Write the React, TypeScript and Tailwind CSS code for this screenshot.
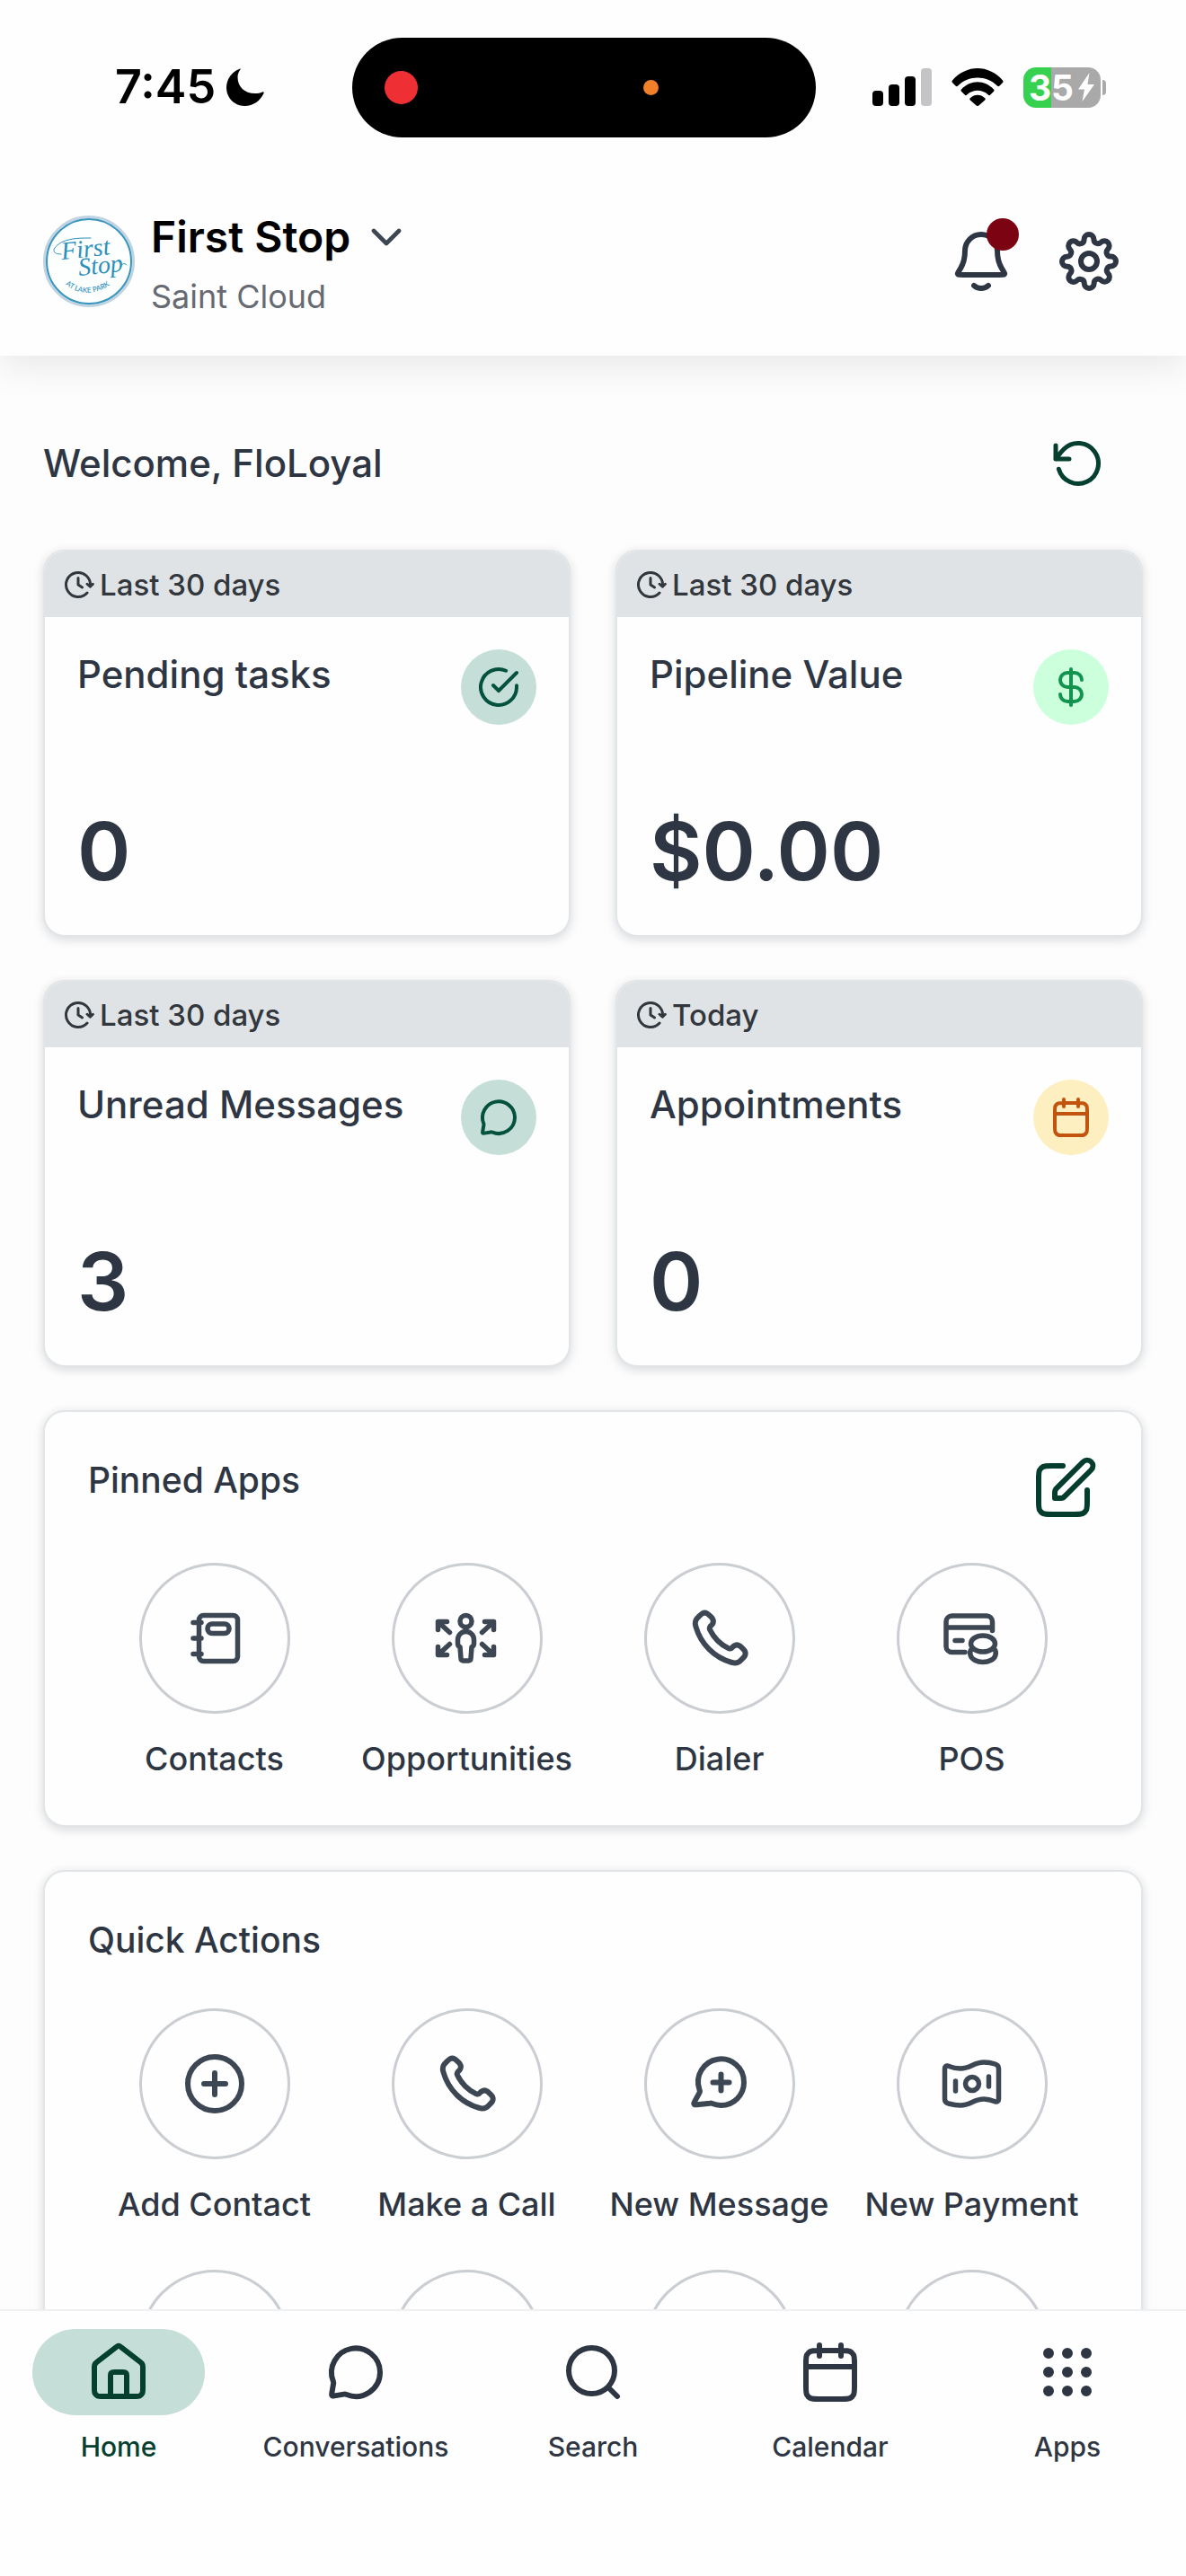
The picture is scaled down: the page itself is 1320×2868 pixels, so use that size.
import type { ReactNode } from "react";

interface IconProps {
  className?: string;
  children: ReactNode;
}

/* 24-unit line icons */
function Icon({ className, children }: IconProps) {
  return (
    <svg
      viewBox="0 0 24 24"
      fill="none"
      stroke="currentColor"
      strokeWidth="2"
      strokeLinecap="round"
      strokeLinejoin="round"
      aria-hidden="true"
      className={className}
    >
      {children}
    </svg>
  );
}

/* 72-unit line icons, used for the more detailed app glyphs */
function AppIcon({ children }: { children: ReactNode }) {
  return (
    <svg
      viewBox="0 0 72 72"
      fill="none"
      stroke="currentColor"
      strokeWidth="5.5"
      strokeLinecap="round"
      strokeLinejoin="round"
      aria-hidden="true"
      className="size-18"
    >
      {children}
    </svg>
  );
}

const BELL = (
  <path d="M9.354 21c.705.622 1.632 1 2.646 1s1.94-.378 2.646-1M18 8A6 6 0 1 0 6 8c0 3.09-.78 5.206-1.65 6.605-.735 1.18-1.102 1.771-1.089 1.936.015.182.054.252.2.36.133.099.732.099 1.928.099H18.61c1.197 0 1.795 0 1.927-.098.147-.11.186-.179.2-.361.014-.165-.353-.755-1.088-1.936C18.78 13.206 18 11.09 18 8Z" />
);

const SETTINGS = (
  <>
    <path d="M12 15a3 3 0 1 0 0-6 3 3 0 0 0 0 6Z" />
    <path d="M18.727 14.727a1.5 1.5 0 0 0 .3 1.655l.055.054a1.816 1.816 0 0 1 0 2.573 1.818 1.818 0 0 1-2.573 0l-.055-.055a1.5 1.5 0 0 0-1.654-.3 1.5 1.5 0 0 0-.91 1.373v.155a1.818 1.818 0 1 1-3.636 0V20.1a1.5 1.5 0 0 0-.981-1.373 1.5 1.5 0 0 0-1.655.3l-.054.055a1.818 1.818 0 0 1-3.106-1.287 1.818 1.818 0 0 1 .533-1.286l.054-.055a1.5 1.5 0 0 0 .3-1.654 1.5 1.5 0 0 0-1.372-.91h-.155a1.818 1.818 0 1 1 0-3.636H3.9a1.5 1.5 0 0 0 1.373-.981 1.5 1.5 0 0 0-.3-1.655l-.055-.054A1.818 1.818 0 1 1 7.491 4.99l.054.054a1.5 1.5 0 0 0 1.655.3h.073a1.5 1.5 0 0 0 .909-1.372v-.155a1.818 1.818 0 0 1 3.636 0V3.9a1.499 1.499 0 0 0 .91 1.373 1.5 1.5 0 0 0 1.654-.3l.054-.055a1.817 1.817 0 0 1 2.573 0 1.819 1.819 0 0 1 0 2.573l-.055.054a1.5 1.5 0 0 0-.3 1.655v.073a1.5 1.5 0 0 0 1.373.909h.155a1.818 1.818 0 0 1 0 3.636H20.1a1.499 1.499 0 0 0-1.373.91Z" />
  </>
);

const MESSAGE = (
  <path d="M21 12a9 9 0 0 1-12.408 8.332c-.201-.083-.303-.124-.384-.142a.95.95 0 0 0-.226-.028c-.083 0-.174.015-.355.046l-3.58.596c-.374.063-.562.094-.698.036a.53.53 0 0 1-.278-.278c-.058-.136-.027-.324.036-.698l.596-3.58c.031-.181.046-.272.046-.355a.95.95 0 0 0-.028-.226c-.018-.081-.059-.183-.142-.384A9 9 0 1 1 21 12Z" />
);

const CALENDAR = (
  <path d="M21 10H3M16 2v4M8 2v4M7.8 22h8.4c1.68 0 2.52 0 3.162-.327a3 3 0 0 0 1.311-1.311C21 19.72 21 18.88 21 17.2V8.8c0-1.68 0-2.52-.327-3.162a3 3 0 0 0-1.311-1.311C18.72 4 17.88 4 16.2 4H7.8c-1.68 0-2.52 0-3.162.327a3 3 0 0 0-1.311 1.311C3 6.28 3 7.12 3 8.8v8.4c0 1.68 0 2.52.327 3.162a3 3 0 0 0 1.311 1.311C5.28 22 6.12 22 7.8 22Z" />
);

const PHONE = (
  <Icon className="size-18">
    <path d="M8.38 8.853a14.603 14.603 0 0 0 2.847 4.01 14.603 14.603 0 0 0 4.01 2.847c.124.06.187.09.265.112.28.082.625.023.862-.147.067-.048.124-.105.239-.219.35-.35.524-.524.7-.639a2 2 0 0 1 2.18 0c.176.115.35.29.7.64l.195.194c.532.531.797.797.942 1.082a2 2 0 0 1 0 1.806c-.145.285-.41.551-.942 1.082l-.157.158c-.53.53-.795.794-1.155.997-.4.224-1.02.386-1.478.384-.413-.001-.695-.081-1.26-.241a19.038 19.038 0 0 1-8.283-4.874A19.039 19.039 0 0 1 3.17 7.761c-.16-.564-.24-.846-.241-1.26-.002-.458.16-1.078.384-1.477.203-.36.468-.625.997-1.155l.158-.157c.53-.532.797-.798 1.082-.942a2 2 0 0 1 1.806 0c.285.144.551.41 1.082.942l.195.195c.35.35.524.524.64.7a2 2 0 0 1 0 2.18c-.116.176-.29.35-.64.7-.114.114-.171.171-.22.238-.17.237-.228.582-.146.862.023.079.053.141.113.266Z" />
  </Icon>
);

const STATS = [
  {
    period: "Last 30 days",
    title: "Pending tasks",
    value: "0",
    tone: "bg-[#c5dfd8] text-[#04513d]",
    icon: <path d="M22 11.086v.92a10 10 0 1 1-5.93-9.14M22 4 12 14.01l-3-3" />,
  },
  {
    period: "Last 30 days",
    title: "Pipeline Value",
    value: "$0.00",
    tone: "bg-[#ccffdb] text-[#12944f]",
    icon: <path d="M6 16a4 4 0 0 0 4 4h4a4 4 0 0 0 0-8h-4a4 4 0 1 1 0-8h4a4 4 0 0 1 4 4M12 2v20" />,
  },
  {
    period: "Last 30 days",
    title: "Unread Messages",
    value: "3",
    tone: "bg-[#c5dfd8] text-[#04513d]",
    icon: MESSAGE,
  },
  {
    period: "Today",
    title: "Appointments",
    value: "0",
    tone: "bg-[#fdefc0] text-[#c2540f]",
    icon: CALENDAR,
  },
];

const PINNED_APPS = [
  {
    label: "Contacts",
    icon: (
      <AppIcon>
        <rect x="18.5" y="10.5" width="43" height="51" rx="5" />
        <rect x="28" y="20" width="24" height="10.5" rx="5" />
        <path d="M12 18.5h9M12 36h9M12 53.5h9" />
      </AppIcon>
    ),
  },
  {
    label: "Opportunities",
    icon: (
      <AppIcon>
        <circle cx="34.5" cy="17" r="6.5" />
        <path d="M34.5 28.5a9 9 0 0 1 9 9v4.5c0 2-1 3-2.5 3.5L40 58.5c0 1.5-1 2.5-2.5 2.5h-6c-1.5 0-2.5-1-2.5-2.5L28 45.5c-1.5-.5-2.5-1.5-2.5-3.5v-4.500a9 9 0 0 1 9-9Z" />
        <path d="M3.5 26.5v-9h10M4.5 18.5l12 11M65.5 26.5v-9h-10M64.5 18.5l-12 11M3.5 45.5v9h10M4.5 53.5l12-11M65.5 45.5v9h-10M64.5 53.5l-12-11" />
      </AppIcon>
    ),
  },
  { label: "Dialer", icon: PHONE },
  {
    label: "POS",
    icon: (
      <AppIcon>
        <path d="M28 51.5H13.5A6.5 6.5 0 0 1 7 45V17.5a6.500 6.500 0 0 1 6.500-6.500h38.500a6.500 6.500 0 0 1 6.500 6.500V27.500M8 24h50M17 38.500h8" />
        <ellipse cx="48" cy="42" rx="13.5" ry="9" />
        <path d="M34.5 49c-1 2-1 4.5-.2 6.5 1.5 4 7 7 13.7 7s12.2-3 13.7-7c.8-2 .8-4.500-.2-6.500" />
      </AppIcon>
    ),
  },
];

const QUICK_ACTIONS = [
  {
    label: "Add Contact",
    icon: (
      <Icon className="size-18">
        <circle cx="12" cy="12" r="10" />
        <path d="M12 8v8M8 12h8" />
      </Icon>
    ),
  },
  { label: "Make a Call", icon: PHONE },
  {
    label: "New Message",
    icon: (
      <Icon className="size-18">
        <path d="M12.500 8.500v6M9.500 11.500h6M21 11.500a8.500 8.500 0 0 1-8.500 8.500c-1.148 0-2.242-.228-3.240-.640-.190-.079-.286-.118-.363-.135a1 1 0 0 0-.206-.026 1.600 1.600 0 0 0-.243.018l-4.930.510c-.490.050-.733.076-.878-.012a.5.5 0 0 1-.234-.350c-.026-.167.090-.382.324-.814l1.637-3.030c.135-.250.202-.375.233-.495a1 1 0 0 0 .038-.355c-.010-.123-.064-.284-.172-.604A8.500 8.500 0 1 1 21 11.500Z" />
      </Icon>
    ),
  },
  {
    label: "New Payment",
    icon: (
      <AppIcon>
        <path d="M5.5 19c0-2.5 1.5-3.5 4-2.8C14 18 18.5 19 23 19c11 0 15-7 26-7 5 0 9 .8 12.5 2 2.5.8 4 2 4 5v34c0 2.5-1.5 3.5-4 2.8C57 54 53.5 53 49 53c-11 0-15 7-26 7-5 0-9-.8-13.500-2-2.500-.8-4-2-4-5Z" />
        <circle cx="36" cy="36" r="7.5" />
        <path d="M17.5 33v11M54.5 28v11" />
      </AppIcon>
    ),
  },
];

const TABS = [
  {
    label: "Home",
    icon: (
      <path d="M9 21v-7.4c0-.56 0-.84.109-1.054a1 1 0 0 1 .437-.437C9.76 12 10.04 12 10.6 12h2.8c.56 0 .84 0 1.054.109a1 1 0 0 1 .437.437C15 12.76 15 13.04 15 13.6V21M11.018 2.764 4.235 8.039c-.453.353-.68.53-.843.75a2 2 0 0 0-.318.65C3 9.704 3 9.991 3 10.565V17.8c0 1.12 0 1.68.218 2.108a2 2 0 0 0 .874.874C4.52 21 5.08 21 6.2 21h11.6c1.12 0 1.68 0 2.108-.218a2 2 0 0 0 .874-.874C21 19.48 21 18.92 21 17.8v-7.235c0-.574 0-.861-.074-1.126a2 2 0 0 0-.318-.65c-.163-.22-.39-.397-.843-.75l-6.783-5.275c-.351-.273-.527-.41-.72-.462a1 1 0 0 0-.523 0c-.194.052-.37.189-.721.462Z" />
    ),
  },
  { label: "Conversations", icon: MESSAGE },
  {
    label: "Search",
    icon: <path d="m21 21-3.5-3.5M20 11.5a8.5 8.5 0 1 1-17 0 8.5 8.5 0 0 1 17 0Z" />,
  },
  { label: "Calendar", icon: CALENDAR },
  {
    label: "Apps",
    icon: (
      <>
        {[5, 12, 19].map((y) =>
          [5, 12, 19].map((x) => <circle key={`${x}-${y}`} cx={x} cy={y} r="1" />)
        )}
      </>
    ),
  },
];

function StatusBar() {
  return (
    <div className="grid h-[194px] grid-cols-[1fr_auto_1fr] items-center pr-5 text-black">
      <div className="flex items-center gap-3 pl-32">
        <span className="text-[52px] leading-none font-semibold">7:45</span>
        <svg viewBox="0 0 42 42" className="size-[42px]" aria-hidden="true">
          <path
            fill="currentColor"
            d="M14.5.8C5.5 4.500 0 12.500 0 21.500 0 33 9 42 20.500 42 29.500 42 37.500 36.500 41.500 28c.6-1.300-.3-2-1.500-1.500-2.500 1-5 1.500-8 1.500C20 28 12.500 20.500 12.500 10c0-3 .8-5.500 2.800-8.200.8-1.100.3-1.500-.8-1Z"
          />
        </svg>
      </div>
      <div className="flex h-[111px] w-[516px] items-center justify-between rounded-full bg-black pr-[175px] pl-9">
        <span className="size-[37px] rounded-full bg-[#ee3035]" />
        <span className="size-[17px] rounded-full bg-[#f2802b]" />
      </div>
      <div className="flex items-center justify-end gap-[22px] pr-[69px]">
        <svg viewBox="0 0 66 42" className="h-[42px] w-[66px]" aria-hidden="true">
          <rect x="0" y="25" width="12" height="17" rx="4" />
          <rect x="18" y="18" width="12" height="24" rx="4" />
          <rect x="36" y="9" width="12" height="33" rx="4" />
          <rect x="54" y="0" width="12" height="42" rx="4" fill="#c4c4c6" />
        </svg>
        <svg viewBox="0 0 58 42" className="h-[42px] w-[58px]" aria-hidden="true">
          <path d="M1 13.5C16.5-4.5 41.5-4.5 57 13.5c.8 1 .7 1.700 0 2.500l-3.500 3.500c-1 1-1.800.8-2.600 0C39 7.500 19 7.500 7.100 19.500c-.8.8-1.600 1-2.600 0L1 16c-.7-.8-.8-1.500 0-2.500Z" />
          <path d="M11 23.5c10-11 26-11 36 0 .7.800.7 1.500 0 2.300L43.300 29.500c-.9.900-1.600.8-2.500 0-7-6.200-16.600-6.200-23.600 0-.9.800-1.600.9-2.500 0L11 25.800c-.7-.8-.7-1.500 0-2.300Z" />
          <path d="M20.8 33.2c4.700-4.600 11.700-4.600 16.400 0 .8.800.7 1.500 0 2.200L30.300 41.500c-.9.800-1.700.8-2.600 0l-6.900-6.100c-.7-.7-.8-1.400 0-2.200Z" />
        </svg>
        <div className="flex items-center gap-[2px]">
          <div className="flex h-[45px] w-[86px] items-center justify-center gap-1 rounded-[14px] bg-linear-to-r from-[#35d14f] from-36% to-[#a9a9aa] to-36% text-white">
            <span className="text-[39px] leading-none font-bold">35</span>
            <svg viewBox="0 0 20 34" className="h-[34px] w-5" aria-hidden="true">
              <path fill="currentColor" d="M13.5 1 1 19.5h7L5.5 33 19 14h-7.5Z" />
            </svg>
          </div>
          <span className="h-[17px] w-1 rounded-r-full bg-[#a9a9aa]" />
        </div>
      </div>
    </div>
  );
}

function Logo() {
  return (
    <svg viewBox="0 0 102 102" className="size-[102px] shrink-0" role="img" aria-label="First Stop logo">
      <circle cx="51" cy="51" r="49.5" fill="#fdfefe" stroke="#bfd3e0" strokeWidth="3" />
      <circle cx="51" cy="51" r="47" fill="none" stroke="#3795bd" strokeWidth="2" />
      <g fill="#2b8fbb" className="font-['Liberation_Serif',cursive] italic">
        <text x="21" y="49" fontSize="28" transform="rotate(-6 21 49)">First</text>
        <text x="40" y="67" fontSize="28" transform="rotate(-6 40 67)">Stop</text>
      </g>
      <path
        d="M20 43c-12 0-10-8 2-14 10-4 20-4 31-4M86 56c3-3 5-3 7-1"
        fill="none"
        stroke="#2b8fbb"
        strokeWidth="1"
        strokeLinecap="round"
      />
      <path id="logo-arc" d="M20 73Q50 100 84 70" fill="none" />
      <text fontSize="8" fill="#2b8fbb" className="font-[Lato,sans-serif]">
        <textPath href="#logo-arc" startOffset="6">AT LAKE PARK</textPath>
      </text>
    </svg>
  );
}

function StatCard({ period, title, value, tone, icon }: (typeof STATS)[number]) {
  return (
    <article className="overflow-hidden rounded-3xl border-2 border-[#e2e5e7] bg-[#fefefe] shadow-[0_3px_12px_rgba(15,23,42,0.16)]">
      <div className="flex h-[73px] items-center gap-1.5 bg-[#dfe3e6] pl-[19px] text-[#32373d]">
        <Icon className="size-9">
          <path d="M20.95 13A9 9 0 1 0 18.7 18M18.7 11.5l2.2 2 2-2M12 7v5l3 2" />
        </Icon>
        <span className="text-[33px] leading-10">{period}</span>
      </div>
      <div className="px-9 pt-9 pb-12">
        <div className="flex items-start justify-between">
          <h2 className="text-[42px] leading-14">{title}</h2>
          <span className={`flex size-[84px] shrink-0 items-center justify-center rounded-full ${tone}`}>
            <Icon className="size-12">{icon}</Icon>
          </span>
        </div>
        <p className="mt-24 text-[90px] leading-none font-semibold">{value}</p>
      </div>
    </article>
  );
}

function ShortcutItem({ label, icon }: { label: string; icon: ReactNode }) {
  return (
    <button type="button" className="flex flex-col items-center gap-[26px]">
      <span className="flex size-[168px] items-center justify-center rounded-full border-3 border-[#cacdd1] text-[#3d4754]">
        {icon}
      </span>
      <span className="text-[36px] leading-12 whitespace-nowrap">{label}</span>
    </button>
  );
}

function Panel({ title, action, children }: { title: string; action?: ReactNode; children: ReactNode }) {
  return (
    <section className="mt-12 rounded-3xl border-2 border-[#e2e5e7] bg-[#fefefe] px-12 pt-12 pb-[50px] shadow-[0_3px_12px_rgba(15,23,42,0.16)]">
      <div className="flex items-start justify-between">
        <h2 className="text-[39px] leading-14">{title}</h2>
        {action}
      </div>
      {children}
    </section>
  );
}

export default function App() {
  return (
    <div className="flex h-screen flex-col bg-[#fdfdfd] font-[Inter,sans-serif] font-medium text-[#2e3643]">
      <header className="relative z-10 bg-[#fefefe] shadow-[0_14px_36px_rgba(0,0,0,0.08)]">
        <StatusBar />
        <div className="flex items-start justify-between pt-[46px] pr-[72px] pb-[42px] pl-12">
          <div className="flex items-start gap-[18px]">
            <Logo />
            <div>
              <button type="button" className="flex h-12 items-center gap-3 text-[48px] font-semibold text-black">
                First Stop
                <Icon className="size-14 text-[#3d4754]">
                  <path d="m6 9 6 6 6-6" />
                </Icon>
              </button>
              <p className="mt-[18px] text-[36px] leading-12 font-normal text-[#666a72]">Saint Cloud</p>
            </div>
          </div>
          <div className="flex h-[102px] items-center gap-12">
            <button type="button" aria-label="Notifications" className="relative">
              <Icon className="size-18">{BELL}</Icon>
              <span className="absolute -top-3 -right-1.5 size-9 rounded-full bg-[#7c0412]" />
            </button>
            <button type="button" aria-label="Settings">
              <Icon className="size-18">{SETTINGS}</Icon>
            </button>
          </div>
        </div>
      </header>

      <main className="min-h-0 flex-1 overflow-y-auto px-12 pt-[90px] [scrollbar-width:none]">
        <div className="flex items-center justify-between pr-[42px] pb-[66px]">
          <h1 className="text-[42px] leading-14">Welcome, FloLoyal</h1>
          <button type="button" aria-label="Refresh" className="text-[#043f2f]">
            <Icon className="size-15">
              <path d="M2 10s2.005-2.732 3.634-4.362a9 9 0 1 1-2.282 8.862M2 10V4m0 6h6" />
            </Icon>
          </button>
        </div>

        <div className="grid grid-cols-2 gap-x-[50px] gap-y-12">
          {STATS.map((stat) => (
            <StatCard key={stat.title} {...stat} />
          ))}
        </div>

        <Panel
          title="Pinned Apps"
          action={
            <button type="button" aria-label="Edit pinned apps" className="text-[#043c2d]">
              <Icon className="size-18">
                <path d="M11 4H6.8c-1.68 0-2.52 0-3.162.327a3 3 0 0 0-1.311 1.311C2 6.28 2 7.12 2 8.8v8.4c0 1.68 0 2.52.327 3.162a3 3 0 0 0 1.311 1.311C4.28 22 5.12 22 6.8 22h8.4c1.68 0 2.52 0 3.162-.327a3 3 0 0 0 1.311-1.311C20 19.72 20 18.88 20 17.2V13M8 16h1.675c.489 0 .733 0 .963-.055a2 2 0 0 0 .579-.24c.201-.123.374-.296.72-.642L21.5 5.5a2.121 2.121 0 0 0-3-3l-9.563 9.563c-.346.346-.519.519-.642.72a2 2 0 0 0-.24.579c-.055.23-.055.474-.055.963V16Z" />
              </Icon>
            </button>
          }
        >
          <div className="mt-12 grid grid-cols-4">
            {PINNED_APPS.map((app) => (
              <ShortcutItem key={app.label} {...app} />
            ))}
          </div>
        </Panel>

        <Panel title="Quick Actions">
          <div className="mt-12 grid grid-cols-4 gap-y-[49px]">
            {QUICK_ACTIONS.map((action) => (
              <ShortcutItem key={action.label} {...action} />
            ))}
            {[0, 1, 2, 3].map((slot) => (
              <span key={slot} className="size-[168px] justify-self-center rounded-full border-3 border-[#cacdd1]" />
            ))}
          </div>
        </Panel>
      </main>

      <nav className="grid shrink-0 grid-cols-5 border-t-2 border-[#eef0f1] bg-[#fefefe] pt-5 pb-[124px]">
        {TABS.map(({ label, icon }, i) => (
          <a
            key={label}
            href="#"
            aria-current={i === 0 ? "page" : undefined}
            className={`flex flex-col items-center gap-[15px] ${i === 0 ? "text-[#05402f]" : ""}`}
          >
            <span className={`flex h-24 w-48 items-center justify-center rounded-full ${i === 0 ? "bg-[#c5dfd8]" : ""}`}>
              <Icon className="size-18">{icon}</Icon>
            </span>
            <span className="text-[30px] leading-10">{label}</span>
          </a>
        ))}
      </nav>
    </div>
  );
}
